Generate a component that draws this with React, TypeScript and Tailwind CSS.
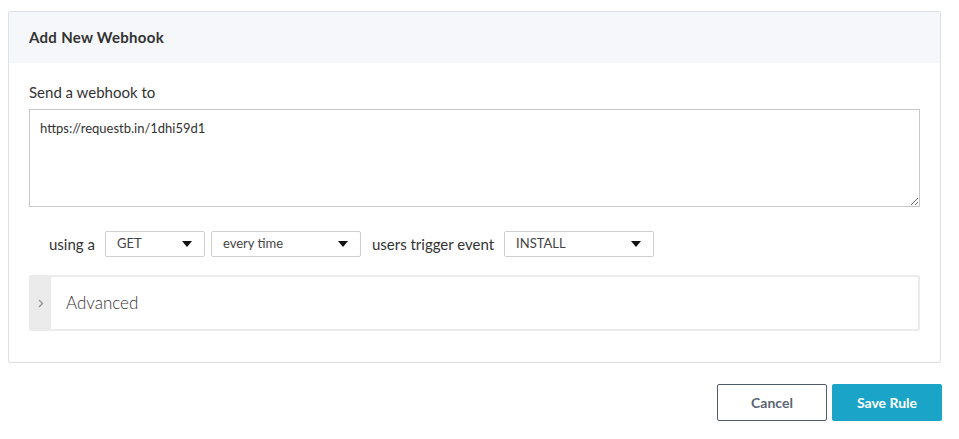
import React from 'react';

const font = { fontFamily: 'Lato, "Open Sans", sans-serif' };

function Select({ value, width }: { value: string; width: string }) {
  return (
    <div
      className={`${width} h-[26px] flex items-center justify-between pl-[11px] pr-[12px] border border-[#cfcfcf] rounded-[2px] bg-white text-[13px] text-[#444]`}
    >
      <span>{value}</span>
      <svg width="10" height="6" viewBox="0 0 10 6">
        <path d="M0 0 L10 0 L5 6 Z" fill="#111" />
      </svg>
    </div>
  );
}

export default function App() {
  return (
    <div className="w-[959px] h-[439px] bg-white pt-[11px]" style={font}>
      <div className="ml-[8px] w-[933px] border border-[#dde1e7] rounded-[2px]">
        <div className="h-[51px] bg-[#f5f7fa] px-[20px] flex items-center">
          <h2 className="text-[15px] font-bold text-[#333] tracking-[0.3px]">Add New Webhook</h2>
        </div>

        <div className="px-[20px] pt-[19px] pb-[31px]">
          <label className="block text-[15px] leading-[20px] text-[#333] mb-[7px]">
            Send a webhook to
          </label>
          <textarea
            className="block w-[891px] h-[98px] border border-[#c8c8c8] px-[10px] pt-[9px] text-[13px] text-[#333] outline-none"
            style={font}
            defaultValue="https://requestb.in/1dhi59d1"
          />

          <div className="flex items-center mt-[24px] pl-[20px] text-[15px] text-[#333]">
            <span className="mr-[10px]">using a</span>
            <Select value="GET" width="w-[100px]" />
            <div className="w-[6px]" />
            <Select value="every time" width="w-[150px]" />
            <span className="ml-[11px] mr-[10px]">users trigger event</span>
            <Select value="INSTALL" width="w-[150px]" />
          </div>

          <div className="mt-[18px] h-[56px] w-[891px] border-2 border-[#ebebeb] rounded-[2px] flex">
            <div className="w-[20px] bg-[#ebebeb] flex items-center justify-center">
              <svg width="6" height="9" viewBox="0 0 6 9">
                <path d="M1 1 L4.5 4.5 L1 8" fill="none" stroke="#8a8f96" strokeWidth="1.3" />
              </svg>
            </div>
            <div className="flex-1 flex items-center pl-[15px] text-[17px] font-light text-[#333]">
              Advanced
            </div>
          </div>
        </div>
      </div>

      <div className="flex justify-end mt-[21px] w-[942px] gap-[5px]">
        <button className="w-[110px] h-[37px] border border-[#4e5d6e] rounded-[2px] bg-white text-[14px] font-bold text-[#5a6575]">
          Cancel
        </button>
        <button className="w-[110px] h-[37px] rounded-[2px] bg-[#1aa4c8] text-[14px] font-bold text-white">
          Save Rule
        </button>
      </div>
    </div>
  );
}
